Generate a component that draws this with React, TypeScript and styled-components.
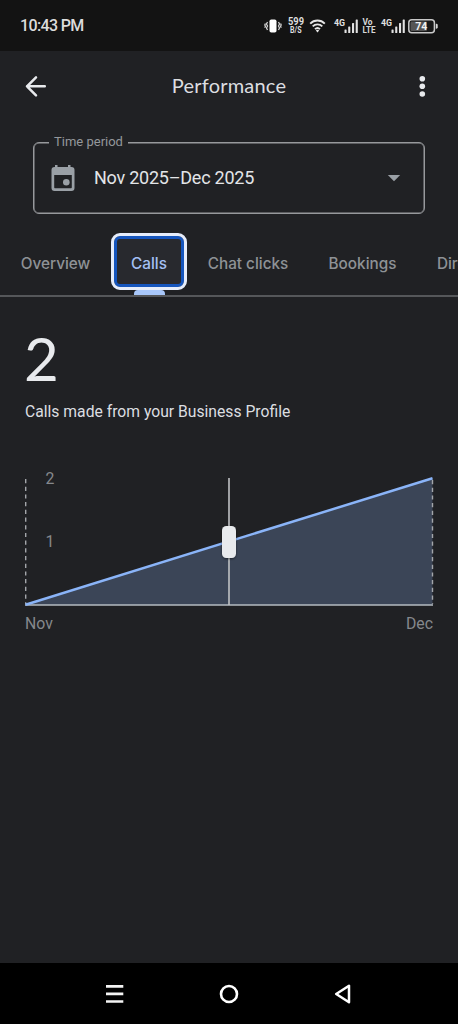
import React from "react";
import styled, { createGlobalStyle } from "styled-components";

const Global = createGlobalStyle`
  *, *::before, *::after { box-sizing: border-box; }
  html, body { margin: 0; padding: 0; background: #202124; }
  body { font-family: Roboto, "Liberation Sans", sans-serif; overflow: hidden; }
`;

const Screen = styled.div`
  width: 458px;
  height: 1024px;
  display: flex;
  flex-direction: column;
  overflow: hidden;
  background: #202124;
`;

const StatusBar = styled.header`
  height: 51px;
  flex: none;
  display: flex;
  align-items: center;
  justify-content: space-between;
  padding: 0 20px 0 20px;
  background: #131313;
`;

const Clock = styled.time`
  font-size: 16px;
  font-weight: 500;
  line-height: 20px;
  letter-spacing: -0.65px;
  color: #dcdcdc;
  padding-top: 1px;
`;

const StatusIcons = styled.svg`
  display: block;
  font-family: Roboto, sans-serif;
  font-weight: 700;
`;

const AppBar = styled.div`
  height: 70px;
  flex: none;
  display: grid;
  grid-template-columns: 72px 1fr 72px;
  align-items: center;
`;

const IconButton = styled.button<{ $end?: boolean }>`
  display: flex;
  justify-content: ${(p) => (p.$end ? "flex-end" : "flex-start")};
  padding: ${(p) => (p.$end ? "0 24px 0 0" : "0 0 0 24px")};
  border: 0;
  background: none;
  color: #e8eaed;
`;

const Title = styled.h1`
  margin: 0 0 2px;
  text-align: center;
  font-family: Lato, sans-serif;
  font-weight: 400;
  font-size: 20px;
  line-height: 28px;
  letter-spacing: 0.2px;
  color: #dcdee1;
`;

const PeriodField = styled.div`
  position: relative;
  flex: none;
  height: 72px;
  margin: 21px 33px 0;
  padding: 0 23px 0 16px;
  display: flex;
  align-items: center;
  border: 1px solid #97999c;
  box-shadow: inset 0 0 0 0.5px #97999c;
  border-radius: 6px;
`;

const FieldLabel = styled.span`
  position: absolute;
  left: 15px;
  top: -10px;
  padding: 0 5px;
  background: #202124;
  font-size: 13px;
  line-height: 18px;
  color: #94979b;
`;

const FieldValue = styled.span`
  flex: 1;
  margin-left: 18px;
  padding-bottom: 1px;
  font-size: 18px;
  line-height: 24px;
  letter-spacing: -0.24px;
  color: #e3e5e8;
`;

const Tabs = styled.nav`
  flex: none;
  height: 83px;
  padding: 19px 0 4px;
  display: flex;
  align-items: flex-start;
  overflow: hidden;
  border-bottom: 2px solid #55575a;
`;

const Tab = styled.button<{ $width: number; $active?: boolean }>`
  position: relative;
  flex: none;
  width: ${(p) => p.$width}px;
  height: 57px;
  padding: ${(p) => (p.$active ? "4px 0 0" : "4px 0 0")};
  border: ${(p) => (p.$active ? "3px solid #e6edfb" : "0")};
  border-radius: ${(p) => (p.$active ? "9px" : "0")};
  box-shadow: ${(p) => (p.$active ? "inset 0 0 0 3px #1555bd" : "none")};
  background: ${(p) => (p.$active ? "#28292e" : "none")};
  color: ${(p) => (p.$active ? "#a4c0f4" : "#8e9296")};
  font-family: Inter, sans-serif;
  font-size: 15.3px;
  font-weight: 500;
  line-height: 20px;
  white-space: nowrap;
`;

const Indicator = styled.span`
  position: absolute;
  left: 20px;
  top: 54px;
  width: 31px;
  height: 5px;
  border-radius: 4px 4px 0 0;
  background: #a8c7fa;
`;

const Metric = styled.section`
  flex: 1;
  padding: 27px 25px 0;
`;

const Total = styled.div`
  margin-left: -1px;
  font-family: Lato, sans-serif;
  font-size: 60px;
  line-height: 68px;
  color: #e8eaed;
`;

const Caption = styled.p`
  margin: 10px 0 0;
  font-size: 15.7px;
  line-height: 20px;
  color: #dcdee1;
  white-space: nowrap;
`;

const ChartSvg = styled.svg`
  display: block;
  margin-top: 55px;
  overflow: visible;
`;

const AxisLabels = styled.div`
  display: flex;
  justify-content: space-between;
  margin-top: 7px;
  font-size: 15.8px;
  line-height: 22px;
  color: #85888c;
`;

const NavBar = styled.footer`
  flex: none;
  height: 61px;
  display: flex;
  align-items: center;
  justify-content: space-between;
  padding: 0 106px;
  background: #000;
`;

function Signal({ x }: { x: number }) {
  return (
    <g fill="#e2e2e2">
      <text x={x} y="12.8" fontSize="9.8" textLength="11" lengthAdjust="spacingAndGlyphs">4G</text>
      <rect x={x + 10.5} y="16.5" width="2.1" height="3.5" rx=".6" />
      <rect x={x + 14.2} y="13.5" width="2.1" height="6.5" rx=".6" />
      <rect x={x + 18} y="10" width="2.1" height="10" rx=".6" />
      <rect x={x + 21.7} y="6.5" width="2.1" height="13.5" rx=".6" />
    </g>
  );
}

function Status() {
  return (
    <StatusIcons width="174" height="26" viewBox="0 0 174 26">
      <rect x="5.5" y="6.5" width="7" height="13" rx="1.8" fill="#fff" />
      <path d="M3.5 9l-1 2 1 2-1 2 1 2M1.4 10.500l-.6 1.500.6 1.300-.6 1.500M14.500 9l1 2-1 2 1 2-1 2M16.600 10.500l.6 1.500-.6 1.300.6 1.500" fill="none" stroke="#ddd" strokeWidth="1.2" />
      <g fill="#dedede">
        <text x="24" y="12" fontSize="10" textLength="16" lengthAdjust="spacingAndGlyphs">599</text>
        <text x="26" y="19.7" fontSize="8.2" textLength="11.5" lengthAdjust="spacingAndGlyphs">B/S</text>
      </g>
      <g fill="none" stroke="#e6e6e6" strokeWidth="1.9">
        <path d="M46.2 10.600a10.2 10.2 0 0 1 14.6 0" />
        <path d="M48.7 13.400a6.8 6.8 0 0 1 9.6 0" />
        <path d="M51 16.100a3.6 3.6 0 0 1 5 0" />
      </g>
      <path d="M51.8 17.600a2.400 2.400 0 0 1 3.400 0L53.500 19.500z" fill="#e6e6e6" />
      <Signal x={70} />
      <g fill="#d8d8d8">
        <text x="98.5" y="12.2" fontSize="8.5" textLength="10" lengthAdjust="spacingAndGlyphs">Vo</text>
        <text x="98.5" y="20" fontSize="8.5" textLength="13" lengthAdjust="spacingAndGlyphs">LTE</text>
      </g>
      <Signal x={117} />
      <rect x="144.8" y="6.8" width="25.6" height="12.9" rx="3" fill="#171717" stroke="#c9c9c9" strokeWidth="1.5" />
      <rect x="146.5" y="8.5" width="16.5" height="9.5" rx="1.2" fill="#555" />
      <path d="M171.8 10.700h.5a1.400 1.400 0 0 1 1.400 1.400v2.200a1.400 1.400 0 0 1-1.400 1.400h-.5z" fill="#d8d8d8" />
      <text x="157.3" y="17" fontSize="10.5" textAnchor="middle" fill="#f2f2f2">74</text>
    </StatusIcons>
  );
}

function BackIcon() {
  return (
    <svg width="24" height="24" viewBox="0 0 24 24" fill="none" stroke="currentColor" strokeWidth="2.5" strokeLinecap="round" strokeLinejoin="round">
      <path d="M20.800 12.300H3M12 3.300L3 12.300l9 9" />
    </svg>
  );
}

function MoreIcon() {
  return (
    <svg width="24" height="24" viewBox="0 0 24 24" fill="currentColor">
      <circle cx="12.3" cy="4.7" r="2.8" />
      <circle cx="12.3" cy="12.3" r="2.8" />
      <circle cx="12.3" cy="20" r="2.8" />
    </svg>
  );
}

function CalendarIcon() {
  return (
    <svg width="26" height="28" viewBox="0 0 26 28" fill="#9aa0a6">
      <path fillRule="evenodd" d="M5 1h2.500v2h10.500V1h2.500v2h1a3 3 0 0 1 3 3v18a3 3 0 0 1-3 3h-17a3 3 0 0 1-3-3V6a3 3 0 0 1 3-3H5zM4.200 11v12.300c0 .6.4 1 1 1h15.600c.6 0 1-.4 1-1V11z" />
      <circle cx="16.3" cy="18.3" r="3.3" />
    </svg>
  );
}

function Chart() {
  return (
    <ChartSvg width="408" height="129" viewBox="0 0 408 129">
      <defs>
        <filter id="knob" x="-50%" y="-30%" width="200%" height="170%">
          <feDropShadow dx="0" dy="1" stdDeviation="1.3" floodColor="#000" floodOpacity=".5" />
        </filter>
      </defs>
      <path d="M.5 128L407.500 1v127z" fill="#3b4557" />
      <path d="M.7 2v125M407.500 3v124" stroke="#a3a6aa" strokeWidth="1.4" strokeDasharray="4.2 3.5" />
      <path d="M0 128h408" stroke="#b4bbc0" strokeWidth="1.3" />
      <path d="M.5 127.700L407.500 1.200" stroke="#8ab4f8" strokeWidth="2.5" />
      <path d="M204 1v127" stroke="#c0c2c5" strokeWidth="1.6" />
      <rect x="197" y="49" width="14" height="32" rx="4.5" fill="#e8eaed" filter="url(#knob)" />
      <g fill="#85888c" fontSize="15.8">
        <text x="20.5" y="7">2</text>
        <text x="20.5" y="70">1</text>
      </g>
    </ChartSvg>
  );
}

export default function App() {
  return (
    <Screen>
      <Global />
      <StatusBar>
        <Clock>10:43 PM</Clock>
        <Status />
      </StatusBar>
      <AppBar>
        <IconButton aria-label="Back"><BackIcon /></IconButton>
        <Title>Performance</Title>
        <IconButton $end aria-label="More options"><MoreIcon /></IconButton>
      </AppBar>
      <PeriodField>
        <FieldLabel>Time period</FieldLabel>
        <CalendarIcon />
        <FieldValue>Nov 2025–Dec 2025</FieldValue>
        <svg width="14" height="8" viewBox="0 0 14 8"><path d="M.8 1h12.400L7 7.200z" fill="#9aa0a6" /></svg>
      </PeriodField>
      <Tabs>
        <Tab $width={111}>Overview</Tab>
        <Tab $width={76} $active>Calls<Indicator /></Tab>
        <Tab $width={122}>Chat clicks</Tab>
        <Tab $width={107}>Bookings</Tab>
        <Tab $width={116}>Directions</Tab>
      </Tabs>
      <Metric>
        <Total>2</Total>
        <Caption>Calls made from your Business Profile</Caption>
        <Chart />
        <AxisLabels><span>Nov</span><span>Dec</span></AxisLabels>
      </Metric>
      <NavBar>
        <svg width="18" height="20" viewBox="0 0 18 20"><path d="M0 2.300h17.300M0 9.900h17.300M0 17.500h17.300" stroke="#f4f4f4" strokeWidth="2.7" /></svg>
        <svg width="20" height="20" viewBox="0 0 20 20"><circle cx="10" cy="10" r="8" fill="none" stroke="#fff" strokeWidth="2.6" /></svg>
        <svg width="18" height="20" viewBox="0 0 18 20"><path d="M15 1.700v16.600L2.200 10z" fill="none" stroke="#fff" strokeWidth="2.5" strokeLinejoin="round" /></svg>
      </NavBar>
    </Screen>
  );
}
